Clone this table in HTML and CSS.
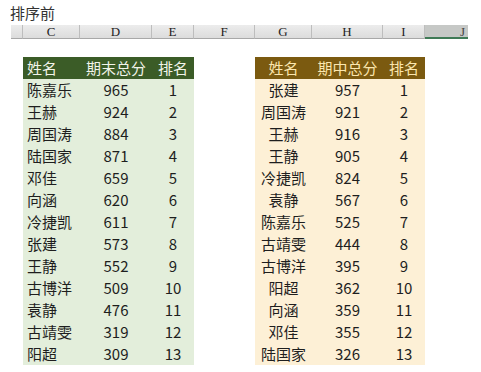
FILE: index.html
```html
<!DOCTYPE html>
<html lang="zh">
<head>
<meta charset="utf-8">
<link rel="stylesheet" href="styles.css">
</head>
<body>
<div class="title">排序前</div>
<div class="colbar">
  <div class="ch w-corner"></div>
  <div class="ch w-c">C</div>
  <div class="ch w-d">D</div>
  <div class="ch w-e">E</div>
  <div class="ch w-f">F</div>
  <div class="ch w-g">G</div>
  <div class="ch w-h">H</div>
  <div class="ch w-i">I</div>
  <div class="ch w-j sel">J</div>
</div>
<div class="sheet">
  <table class="tbl green">
    <colgroup><col class="c1"><col class="c2"><col class="c3"></colgroup>
    <thead><tr><th class="name">姓名</th><th>期末总分</th><th>排名</th></tr></thead>
    <tbody>
      <tr><td class="name">陈嘉乐</td><td>965</td><td>1</td></tr>
      <tr><td class="name">王赫</td><td>924</td><td>2</td></tr>
      <tr><td class="name">周国涛</td><td>884</td><td>3</td></tr>
      <tr><td class="name">陆国家</td><td>871</td><td>4</td></tr>
      <tr><td class="name">邓佳</td><td>659</td><td>5</td></tr>
      <tr><td class="name">向涵</td><td>620</td><td>6</td></tr>
      <tr><td class="name">冷捷凯</td><td>611</td><td>7</td></tr>
      <tr><td class="name">张建</td><td>573</td><td>8</td></tr>
      <tr><td class="name">王静</td><td>552</td><td>9</td></tr>
      <tr><td class="name">古博洋</td><td>509</td><td>10</td></tr>
      <tr><td class="name">袁静</td><td>476</td><td>11</td></tr>
      <tr><td class="name">古靖雯</td><td>319</td><td>12</td></tr>
      <tr><td class="name">阳超</td><td>309</td><td>13</td></tr>
    </tbody>
  </table>
  <table class="tbl gold">
    <colgroup><col class="c1"><col class="c2b"><col class="c3"></colgroup>
    <thead><tr><th>姓名</th><th>期中总分</th><th>排名</th></tr></thead>
    <tbody>
      <tr><td>张建</td><td>957</td><td>1</td></tr>
      <tr><td>周国涛</td><td>921</td><td>2</td></tr>
      <tr><td>王赫</td><td>916</td><td>3</td></tr>
      <tr><td>王静</td><td>905</td><td>4</td></tr>
      <tr><td>冷捷凯</td><td>824</td><td>5</td></tr>
      <tr><td>袁静</td><td>567</td><td>6</td></tr>
      <tr><td>陈嘉乐</td><td>525</td><td>7</td></tr>
      <tr><td>古靖雯</td><td>444</td><td>8</td></tr>
      <tr><td>古博洋</td><td>395</td><td>9</td></tr>
      <tr><td>阳超</td><td>362</td><td>10</td></tr>
      <tr><td>向涵</td><td>359</td><td>11</td></tr>
      <tr><td>邓佳</td><td>355</td><td>12</td></tr>
      <tr><td>陆国家</td><td>326</td><td>13</td></tr>
    </tbody>
  </table>
</div>
</body>
</html>
```
FILE: styles.css
```css
html, body {
  margin: 0;
  padding: 0;
  background: #ffffff;
}
body {
  width: 481px;
  height: 372px;
  overflow: hidden;
  font-family: "Noto Sans CJK SC", "Noto Sans", sans-serif;
  color: #222;
}
.title {
  font-size: 15px;
  line-height: 17px;
  padding: 4px 0 0 10px;
  height: 20px;
  color: #333;
  box-sizing: border-box;
}
.colbar {
  display: flex;
  margin-top: 5px;
  margin-left: 11px;
  height: 14px;
}
.ch {
  box-sizing: border-box;
  height: 14px;
  background: linear-gradient(#ececec, #dcdcdc);
  border-right: 1px solid #bdbdbd;
  border-bottom: 1px solid #a8a8a8;
  font-family: "Liberation Serif", "DejaVu Serif", serif;
  font-size: 13px;
  line-height: 13px;
  text-align: center;
  color: #222;
}
.w-corner { width: 12px; }
.w-c { width: 57px; }
.w-d { width: 72px; }
.w-e { width: 42px; }
.w-f { width: 61px; }
.w-g { width: 57px; }
.w-h { width: 71px; }
.w-i { width: 42px; }
.w-j { width: 43px; border-right: none; }
.sel {
  background: #c6c8c6;
  border-bottom: 2px solid #3f7a56;
  text-align: right;
  padding-right: 3px;
  color: #444;
}
.sheet {
  display: flex;
  gap: 61px;
  padding: 18px 0 0 23px;
}
.tbl {
  border-collapse: collapse;
  table-layout: fixed;
  font-size: 15px;
}
.tbl th, .tbl td {
  height: 22px;
  padding: 0;
  line-height: 22px;
  text-align: center;
  font-weight: normal;
  white-space: nowrap;
}
.c1 { width: 57px; }
.c2 { width: 72px; }
.c2b { width: 71px; }
.c3 { width: 42px; }
.tbl .name { text-align: left; padding-left: 4px; }
.green thead tr { background: #3b5c27; color: #f2f4ea; }
.green tbody tr { background: #e3eedb; }
.gold thead tr { background: #7b5a10; color: #fbe6ae; }
.gold tbody tr { background: #fdf0d6; }
.tbl td { color: #1e1e1e; }
```
